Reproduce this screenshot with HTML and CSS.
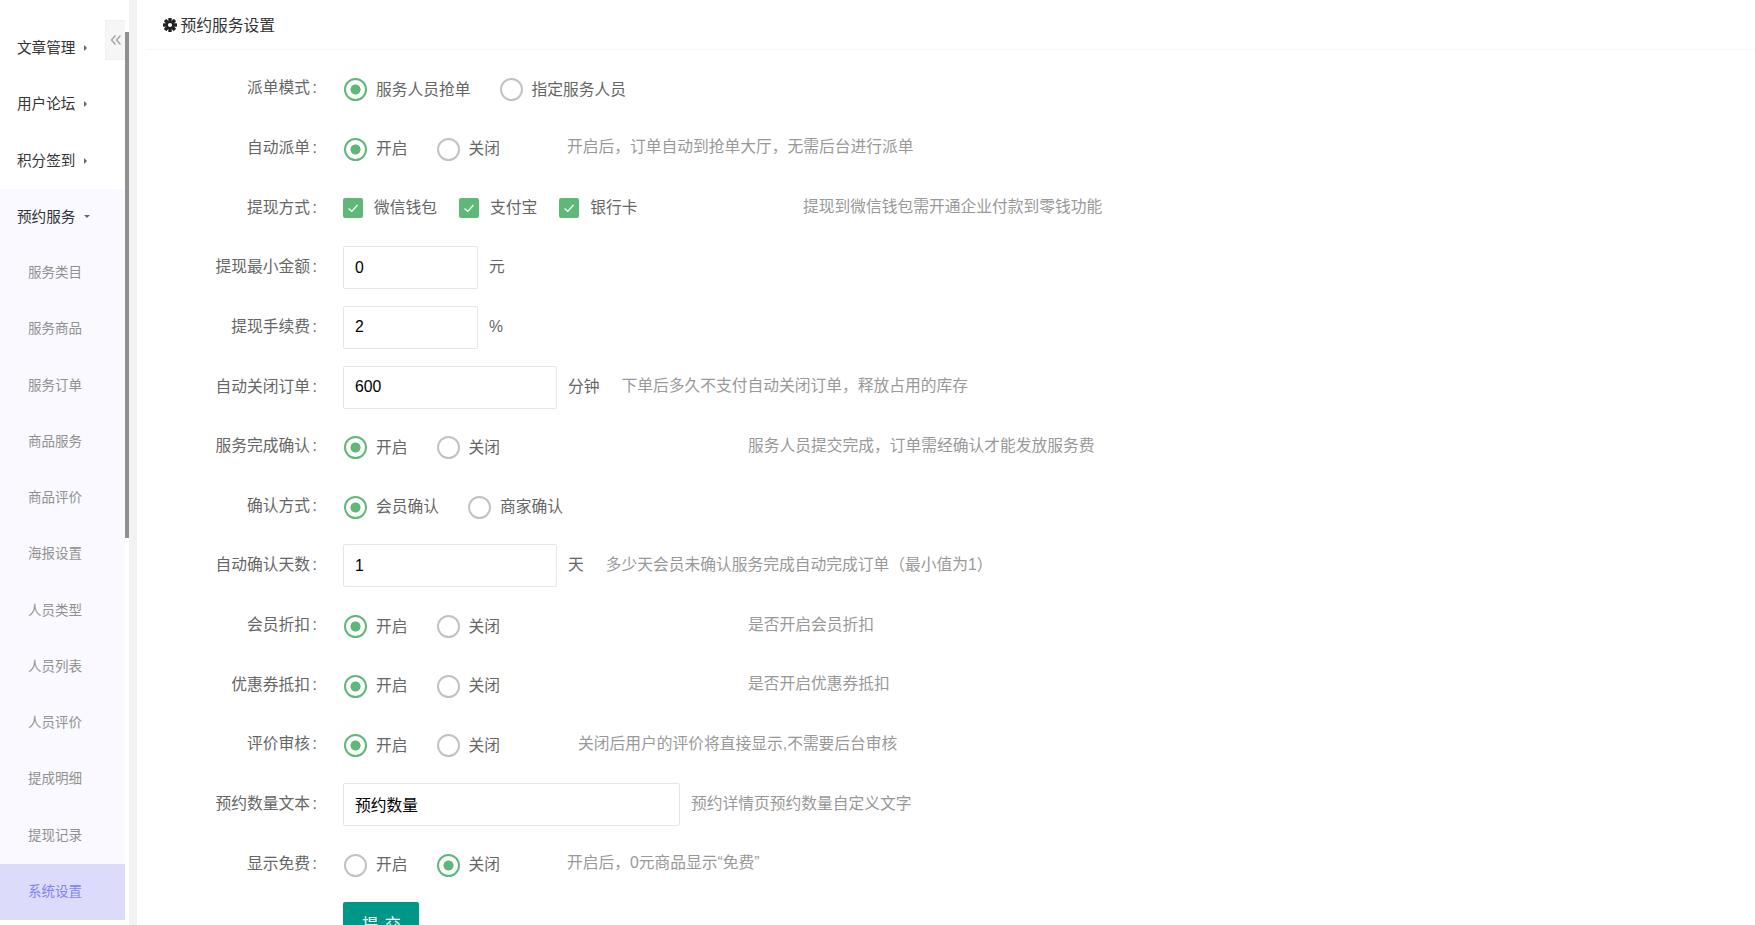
FILE: index.html
```html
<!DOCTYPE html>
<html lang="zh-CN">
<head>
<meta charset="utf-8">
<title>预约服务设置</title>
<link rel="stylesheet" href="styles.css">
</head>
<body>
<div class="app">
  <aside class="sidebar">
    <nav class="menu">
      <a class="menu-item">文章管理<i class="caret-right"></i></a>
      <a class="menu-item">用户论坛<i class="caret-right"></i></a>
      <a class="menu-item">积分签到<i class="caret-right"></i></a>
      <a class="menu-item open">预约服务<i class="caret-down"></i></a>
      <a class="sub-item">服务类目</a>
      <a class="sub-item">服务商品</a>
      <a class="sub-item">服务订单</a>
      <a class="sub-item">商品服务</a>
      <a class="sub-item">商品评价</a>
      <a class="sub-item">海报设置</a>
      <a class="sub-item">人员类型</a>
      <a class="sub-item">人员列表</a>
      <a class="sub-item">人员评价</a>
      <a class="sub-item">提成明细</a>
      <a class="sub-item">提现记录</a>
      <a class="sub-item active">系统设置</a>
    </nav>
    <div class="collapse-btn">
      <svg width="12" height="12" viewBox="0 0 12 12"><path d="M5.500 1.500 1.500 6l4 4.500M10.500 1.500 6.500 6l4 4.500" fill="none" stroke="#a8a8a8" stroke-width="1.600"/></svg>
    </div>
    <div class="scroll-track"><div class="scroll-thumb"></div></div>
  </aside>
  <div class="gutter"></div>
  <main class="main">
    <h1 class="title">
      <svg class="gear" width="14" height="14" viewBox="0 0 14 14">
        <g fill="#222">
          <rect x="5.300" y="0" width="3.400" height="14" rx=".6"/>
          <rect x="5.300" y="0" width="3.400" height="14" rx=".6" transform="rotate(45 7 7)"/>
          <rect x="5.300" y="0" width="3.400" height="14" rx=".6" transform="rotate(90 7 7)"/>
          <rect x="5.300" y="0" width="3.400" height="14" rx=".6" transform="rotate(135 7 7)"/>
        </g>
        <circle cx="7" cy="7" r="3.400" fill="#222"/>
        <circle cx="7" cy="7" r="2.100" fill="#fff"/>
      </svg>
      预约服务设置
    </h1>
    <form class="form">
      <div class="row"><label class="label">派单模式<span class="colon">:</span></label>
        <div class="controls"><span class="radio on"></span><span class="opt">服务人员抢单</span><span class="radio"></span><span class="opt">指定服务人员</span></div>
      </div>
      <div class="row"><label class="label">自动派单<span class="colon">:</span></label>
        <div class="controls w224"><span class="radio on"></span><span class="opt">开启</span><span class="radio"></span><span class="opt">关闭</span></div>
        <span class="hint">开启后，订单自动到抢单大厅，无需后台进行派单</span>
      </div>
      <div class="row"><label class="label">提现方式<span class="colon">:</span></label>
        <div class="controls checks w460"><span class="check"><svg width="14" height="14" viewBox="0 0 14 14"><path d="M2.500 7.500 5.800 10.500 11.500 4" fill="none" stroke="#fff" stroke-width="1.200"/></svg></span><span class="opt">微信钱包</span><span class="check"><svg width="14" height="14" viewBox="0 0 14 14"><path d="M2.500 7.500 5.800 10.500 11.500 4" fill="none" stroke="#fff" stroke-width="1.200"/></svg></span><span class="opt">支付宝</span><span class="check"><svg width="14" height="14" viewBox="0 0 14 14"><path d="M2.500 7.500 5.800 10.500 11.500 4" fill="none" stroke="#fff" stroke-width="1.200"/></svg></span><span class="opt">银行卡</span></div>
        <span class="hint">提现到微信钱包需开通企业付款到零钱功能</span>
      </div>
      <div class="row"><label class="label">提现最小金额<span class="colon">:</span></label>
        <input class="input small" value="0"><span class="unit">元</span>
      </div>
      <div class="row"><label class="label">提现手续费<span class="colon">:</span></label>
        <input class="input small" value="2"><span class="unit symbol">%</span>
      </div>
      <div class="row"><label class="label">自动关闭订单<span class="colon">:</span></label>
        <input class="input medium" value="600"><span class="unit">分钟</span>
        <span class="hint gap-22">下单后多久不支付自动关闭订单，释放占用的库存</span>
      </div>
      <div class="row"><label class="label">服务完成确认<span class="colon">:</span></label>
        <div class="controls w405"><span class="radio on"></span><span class="opt">开启</span><span class="radio"></span><span class="opt">关闭</span></div>
        <span class="hint">服务人员提交完成，订单需经确认才能发放服务费</span>
      </div>
      <div class="row"><label class="label">确认方式<span class="colon">:</span></label>
        <div class="controls"><span class="radio on"></span><span class="opt">会员确认</span><span class="radio"></span><span class="opt">商家确认</span></div>
      </div>
      <div class="row"><label class="label">自动确认天数<span class="colon">:</span></label>
        <input class="input medium" value="1"><span class="unit">天</span>
        <span class="hint gap-22">多少天会员未确认服务完成自动完成订单（最小值为1）</span>
      </div>
      <div class="row"><label class="label">会员折扣<span class="colon">:</span></label>
        <div class="controls w405"><span class="radio on"></span><span class="opt">开启</span><span class="radio"></span><span class="opt">关闭</span></div>
        <span class="hint">是否开启会员折扣</span>
      </div>
      <div class="row"><label class="label">优惠券抵扣<span class="colon">:</span></label>
        <div class="controls w405"><span class="radio on"></span><span class="opt">开启</span><span class="radio"></span><span class="opt">关闭</span></div>
        <span class="hint">是否开启优惠券抵扣</span>
      </div>
      <div class="row"><label class="label">评价审核<span class="colon">:</span></label>
        <div class="controls w235"><span class="radio on"></span><span class="opt">开启</span><span class="radio"></span><span class="opt">关闭</span></div>
        <span class="hint">关闭后用户的评价将直接显示,不需要后台审核</span>
      </div>
      <div class="row"><label class="label">预约数量文本<span class="colon">:</span></label>
        <input class="input large" value="预约数量"><span class="hint unit-hint">预约详情页预约数量自定义文字</span>
      </div>
      <div class="row"><label class="label">显示免费<span class="colon">:</span></label>
        <div class="controls w224"><span class="radio"></span><span class="opt">开启</span><span class="radio on"></span><span class="opt">关闭</span></div>
        <span class="hint">开启后，0元商品显示“免费”</span>
      </div>
      <div class="row submit-row"><span class="label"></span><button class="btn" type="button">提 交</button></div>
    </form>
  </main>
</div>
</body>
</html>
```
FILE: styles.css
```css
* { box-sizing: border-box; }
html, body { margin: 0; height: 925px; overflow: hidden; background: #fff; }
body { font-family: "Liberation Sans", "Noto Sans CJK SC", sans-serif; color: #666; }
.app { display: flex; height: 925px; overflow: hidden; }

.sidebar { position: relative; display: flex; width: 129px; flex: none; }
.menu { width: 125px; padding-top: 20px; }
.menu-item { display: flex; align-items: center; height: 56.250px; padding: 0 0 3px 17px; font-size: 14.625px; color: #333; }
.menu-item.open { background: #f9f9ff; }
.sub-item { display: flex; align-items: center; height: 56.250px; padding: 0 0 4px 28px; font-size: 13.500px; color: #919191; background: #f9f9ff; }
.sub-item.active { background: #dcdcfa; color: #8282ee; }
.caret-right { margin-left: 9px; margin-top: 3px; border-left: 3.500px solid #666; border-top: 3px solid transparent; border-bottom: 3px solid transparent; }
.caret-down { margin-left: 9px; margin-top: 3px; border-top: 3.500px solid #666; border-left: 3px solid transparent; border-right: 3px solid transparent; }
.collapse-btn { position: absolute; left: 105px; top: 20px; width: 20px; height: 40px; display: flex; align-items: center; justify-content: center; background: #f6f6f6; border: 1px solid #f0f0f0; border-right: 0; }
.scroll-track { width: 4px; background: #fff; }
.scroll-thumb { width: 4px; height: 506px; margin-top: 32px; background: #909090; }
.gutter { width: 8px; flex: none; background: #f2f2f2; }

.main { flex: 1; min-width: 0; padding-left: 9px; }
.title { display: flex; align-items: center; gap: 3.500px; height: 50px; margin: 0; padding-left: 17px; font-size: 15.750px; font-weight: 400; color: #333; border-bottom: 1px solid #f6f6f6; }
.form { padding-top: 9px; }
.row { display: flex; align-items: center; height: 59.650px; }
.label { width: 171px; margin-right: 26px; flex: none; margin-top: -1px; text-align: right; font-size: 15.750px; line-height: 22px; color: #666; white-space: nowrap; }
.colon { margin-left: 2.500px; }
.controls { display: flex; align-items: center; margin-top: 2px; }
.checks { margin-top: 0; }
.w224 { width: 224px; }
.w235 { width: 235px; }
.w405 { width: 405px; }
.w460 { width: 460px; }
.radio { width: 23px; height: 23px; margin-left: 1px; flex: none; border: 2px solid #c2c2c2; border-radius: 50%; }
.radio.on { border-color: #5fb878; background: radial-gradient(circle, #5fb878 0 4.800px, #fff 5.300px); }
.opt { margin-left: 9px; margin-right: 28px; font-size: 15.750px; line-height: 22px; color: #666; white-space: nowrap; }
.check { display: flex; align-items: center; justify-content: center; width: 20px; height: 20px; flex: none; background: #5fb878; border-radius: 2px; }
.check + .opt { margin-left: 11px; margin-right: 22px; }
.hint { margin-top: -2px; font-size: 15.750px; line-height: 22px; color: #999; white-space: nowrap; }
.input { height: 43px; padding: 0 11px; border: 1px solid #e6e6e6; border-radius: 2px; background: #fff; font-family: "Liberation Sans", "Noto Sans CJK SC", sans-serif; font-size: 15.750px; color: #000; outline: none; }
.small { width: 135px; }
.medium { width: 214px; }
.large { width: 337px; }
.unit { margin-left: 11px; margin-top: -4px; font-size: 15.750px; color: #666; }
.symbol { margin-top: -1px; }
.gap-22 { margin-left: 22px; }
.unit-hint { margin-left: 11px; }
.btn { width: 76px; height: 43px; align-self: flex-start; margin-top: 8px; padding-left: 8px; border: 0; border-radius: 2px; background: #009688; color: #fff; font-family: inherit; font-size: 16px; letter-spacing: 1px; }
```
